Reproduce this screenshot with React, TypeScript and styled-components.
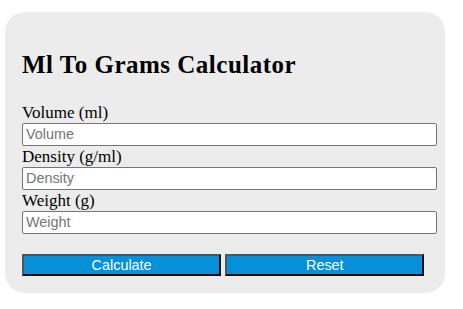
import React, { useState } from "react";
import styled, { createGlobalStyle } from "styled-components";

const GlobalStyle = createGlobalStyle`
  body {
    margin: 0;
    background: #ffffff;
    font-family: "Liberation Serif", "Times New Roman", serif;
    color: #000000;
  }
`;

const Card = styled.div`
  width: 440px;
  box-sizing: border-box;
  margin: 12px 0 0 5px;
  padding: 22px 8px 17px 17px;
  background: #ececec;
  border-radius: 20px;
`;

const Title = styled.h2`
  margin: 17px 0 23px;
  font-size: 25px;
  font-weight: bold;
  line-height: 27.6px;
  letter-spacing: 0.5px;
`;

const Label = styled.label`
  display: block;
  font-size: 17px;
  line-height: 21px;
`;

const Input = styled.input`
  display: block;
  width: 100%;
  height: 23px;
  box-sizing: border-box;
  margin: 0;
  padding: 0 3px;
  border: 1px solid #767676;
  border-radius: 2px;
  background: #ffffff;
  font-family: "Liberation Sans", Arial, sans-serif;
  font-size: 14.4px;
  outline: none;

  &::placeholder {
    color: #757575;
  }
`;

const Buttons = styled.div`
  display: flex;
  gap: 4px;
  margin-top: 20px;
`;

const Button = styled.button`
  width: 48%;
  height: 22px;
  box-sizing: border-box;
  padding: 0;
  background: #0690d9;
  color: #ffffff;
  border-style: solid;
  border-width: 2px;
  border-color: #555555 #111111 #111111 #555555;
  font-family: "Liberation Sans", Arial, sans-serif;
  font-size: 14.4px;
  line-height: 18px;
  cursor: pointer;
`;

const App = () => {
  const [volume, setVolume] = useState("");
  const [density, setDensity] = useState("");
  const [weight, setWeight] = useState("");

  const calculate = () => {
    const v = parseFloat(volume);
    const d = parseFloat(density);
    if (!isNaN(v) && !isNaN(d)) setWeight(String(v * d));
  };

  const reset = () => {
    setVolume("");
    setDensity("");
    setWeight("");
  };

  return (
    <>
      <GlobalStyle />
      <Card>
        <Title>Ml To Grams Calculator</Title>
        <Label htmlFor="volume">Volume (ml)</Label>
        <Input
          id="volume"
          placeholder="Volume"
          value={volume}
          onChange={(e) => setVolume(e.target.value)}
        />
        <Label htmlFor="density">Density (g/ml)</Label>
        <Input
          id="density"
          placeholder="Density"
          value={density}
          onChange={(e) => setDensity(e.target.value)}
        />
        <Label htmlFor="weight">Weight (g)</Label>
        <Input
          id="weight"
          placeholder="Weight"
          value={weight}
          onChange={(e) => setWeight(e.target.value)}
        />
        <Buttons>
          <Button onClick={calculate}>Calculate</Button>
          <Button onClick={reset}>Reset</Button>
        </Buttons>
      </Card>
    </>
  );
};

export default App;
